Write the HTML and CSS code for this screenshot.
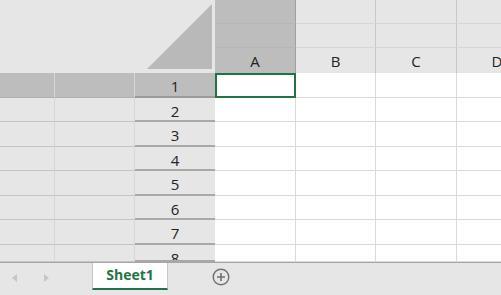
FILE: index.html
```html
<!DOCTYPE html>
<html lang="en">
<head>
    <meta charset="UTF-8">
    <title>Sheet1</title>
    <link rel="stylesheet" href="styles.css">
</head>
<body>
    <div class="sheet">
        <div class="corner">
            <svg width="215" height="73" viewBox="0 0 215 73">
                <polygon points="147,69 212,4 212,69" fill="#b9b9b9"/>
            </svg>
        </div>
        <!-- column header, 3 bands -->
        <div class="ch sel"></div><div class="ch"></div><div class="ch"></div><div class="ch"></div>
        <div class="ch sel"></div><div class="ch"></div><div class="ch"></div><div class="ch"></div>
        <div class="ch last sel">A</div><div class="ch last">B</div><div class="ch last">C</div><div class="ch last">D</div>

        <div class="rh sel"></div><div class="rh sel"></div><div class="rh num sel">1</div>
        <div class="cell active"></div><div class="cell"></div><div class="cell"></div><div class="cell"></div>

        <div class="rh"></div><div class="rh"></div><div class="rh num">2</div>
        <div class="cell"></div><div class="cell"></div><div class="cell"></div><div class="cell"></div>

        <div class="rh"></div><div class="rh"></div><div class="rh num">3</div>
        <div class="cell"></div><div class="cell"></div><div class="cell"></div><div class="cell"></div>

        <div class="rh"></div><div class="rh"></div><div class="rh num">4</div>
        <div class="cell"></div><div class="cell"></div><div class="cell"></div><div class="cell"></div>

        <div class="rh"></div><div class="rh"></div><div class="rh num">5</div>
        <div class="cell"></div><div class="cell"></div><div class="cell"></div><div class="cell"></div>

        <div class="rh"></div><div class="rh"></div><div class="rh num">6</div>
        <div class="cell"></div><div class="cell"></div><div class="cell"></div><div class="cell"></div>

        <div class="rh"></div><div class="rh"></div><div class="rh num">7</div>
        <div class="cell"></div><div class="cell"></div><div class="cell"></div><div class="cell"></div>

        <div class="rh"></div><div class="rh"></div><div class="rh num">8</div>
        <div class="cell"></div><div class="cell"></div><div class="cell"></div><div class="cell"></div>
    </div>
    <div class="tabs">
        <div class="nav">
            <span class="arrow-left"></span>
            <span class="arrow-right"></span>
        </div>
        <div class="tab">Sheet1</div>
        <div class="add">
            <svg width="18" height="18" viewBox="0 0 18 18">
                <circle cx="9" cy="9" r="7.8" fill="none" stroke="#707070" stroke-width="1.4"/>
                <path d="M9 5v8M5 9h8" stroke="#707070" stroke-width="1.6"/>
            </svg>
        </div>
    </div>
</body>
</html>
```

FILE: styles.css
```css
*{
    margin: 0;
    padding: 0;
    box-sizing: border-box;
}
body{
    width: 501px;
    height: 295px;
    overflow: hidden;
    background: #fff;
    font-family: "Open Sans", "Noto Sans", sans-serif;
    color: #222;
}
.sheet{
    display: grid;
    grid-template-columns: 55px 80px 80px 81px 80px 81px 81px;
    grid-template-rows: 24px 24px 25px 25px 24px 25px 24px 25px 24px 25px 17px;
    height: 262px;
    overflow: hidden;
}
.corner{
    grid-column: 1 / 4;
    grid-row: 1 / 4;
    background: #e6e6e6;
}
.corner svg{
    display: block;
}
.ch{
    background: #e6e6e6;
    border-right: 1px solid #c8c8c8;
    border-bottom: 1px solid #d6d6d6;
    font-size: 15px;
    text-align: center;
    line-height: 27px;
}
.ch.last{
    border-bottom: 0;
}
.ch.sel{
    background: #bdbdbd;
    border-right-color: #a0a0a0;
    border-bottom-color: #b6b6b6;
}
.ch.last.sel{
    border-bottom: 0;
}
.rh{
    background: #e6e6e6;
    border-right: 1px solid #d6d6d6;
    border-bottom: 1px solid #c4c4c4;
}
.rh.num{
    border-right: 0;
    border-bottom: 2px solid #a8a8a8;
    font-size: 15px;
    text-align: center;
    line-height: 27px;
    overflow: hidden;
}
.rh.sel{
    background: #bdbdbd;
    border-bottom-color: #b0b0b0;
}
.rh.num.sel{
    border-bottom-color: #9a9a9a;
}
.cell{
    border-right: 1px solid #dadada;
    border-bottom: 1px solid #dadada;
}
.cell.active{
    border: 2px solid #217346;
}
.tabs{
    height: 33px;
    background: #e6e6e6;
    border-top: 1px solid #a6a6a6;
    display: flex;
    align-items: flex-start;
}
.nav{
    display: flex;
    align-items: center;
    gap: 27px;
    width: 92px;
    height: 30px;
    padding-left: 12px;
}
.arrow-left{
    width: 0;
    height: 0;
    border-top: 4px solid transparent;
    border-bottom: 4px solid transparent;
    border-right: 5px solid #c6c6c6;
}
.arrow-right{
    width: 0;
    height: 0;
    border-top: 4px solid transparent;
    border-bottom: 4px solid transparent;
    border-left: 5px solid #c6c6c6;
}
.tab{
    width: 76px;
    height: 27px;
    background: #fff;
    border-left: 1px solid #c6c6c6;
    border-right: 1px solid #c6c6c6;
    border-bottom: 2px solid #217346;
    color: #217346;
    font-weight: bold;
    font-size: 14px;
    text-align: center;
    line-height: 24px;
}
.add{
    margin-left: 44px;
    margin-top: 5px;
    height: 18px;
}
.add svg{
    display: block;
}
```
